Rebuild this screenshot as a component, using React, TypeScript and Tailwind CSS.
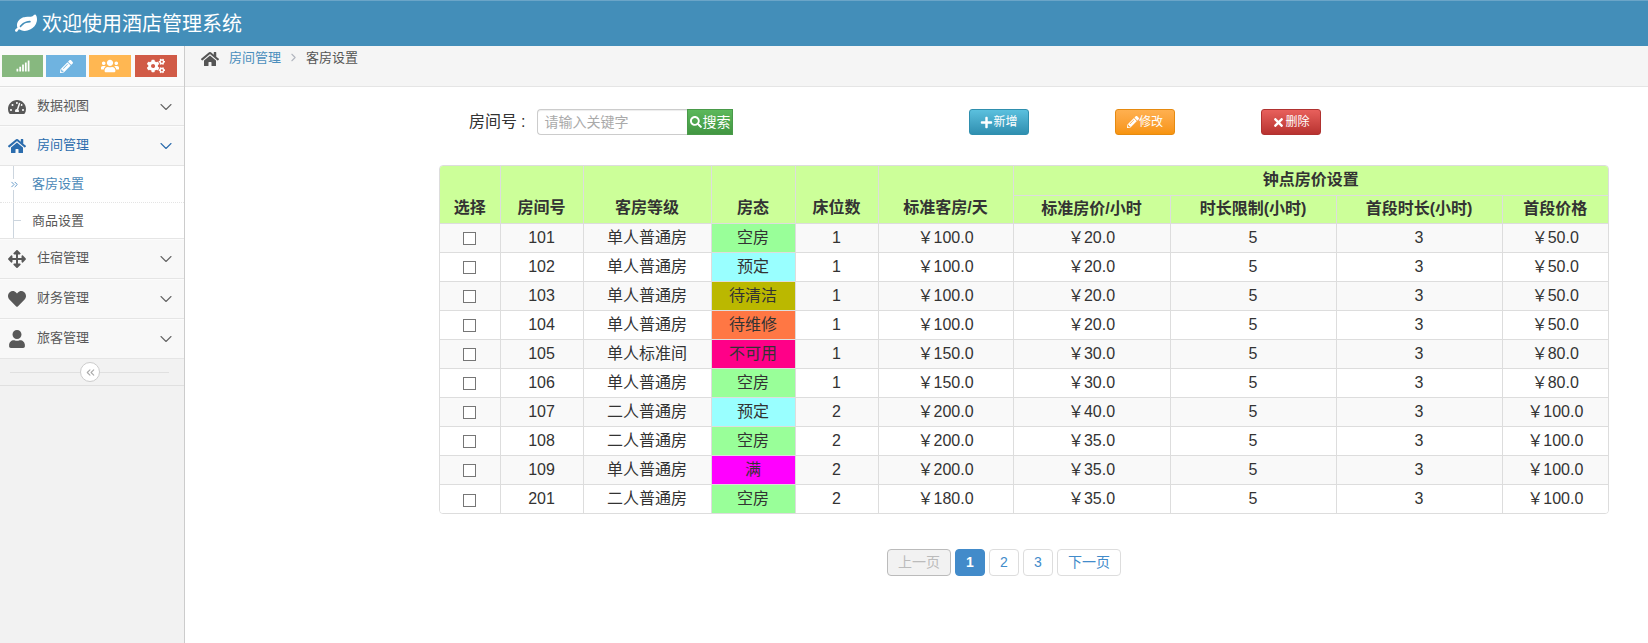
import { useState } from "react";
import { ChevronDown, ChevronRight, ChevronsLeft, ChevronsRight } from "lucide-react";
import { FaCogs, FaHeart, FaHome, FaPencilAlt, FaPlus, FaSearch, FaSignal, FaTachometerAlt, FaTimes, FaUser, FaUsers, FaArrowsAlt } from "react-icons/fa";

const rows = [
  ["101", "单人普通房", "空房", "1", "100.0", "20.0", "5", "3", "50.0"],
  ["102", "单人普通房", "预定", "1", "100.0", "20.0", "5", "3", "50.0"],
  ["103", "单人普通房", "待清洁", "1", "100.0", "20.0", "5", "3", "50.0"],
  ["104", "单人普通房", "待维修", "1", "100.0", "20.0", "5", "3", "50.0"],
  ["105", "单人标准间", "不可用", "1", "150.0", "30.0", "5", "3", "80.0"],
  ["106", "单人普通房", "空房", "1", "150.0", "30.0", "5", "3", "80.0"],
  ["107", "二人普通房", "预定", "2", "200.0", "40.0", "5", "3", "100.0"],
  ["108", "二人普通房", "空房", "2", "200.0", "35.0", "5", "3", "100.0"],
  ["109", "单人普通房", "满", "2", "200.0", "35.0", "5", "3", "100.0"],
  ["201", "二人普通房", "空房", "2", "180.0", "35.0", "5", "3", "100.0"],
];

const stateColors: Record<string, string> = {
  空房: "bg-[#99ff99]",
  预定: "bg-[#99ffff]",
  待清洁: "bg-[#bbb800]",
  待维修: "bg-[#ff7744]",
  不可用: "bg-[#ff0088]",
  满: "bg-[#ff00ff]",
};

function Leaf() {
  return (
    <svg viewBox="0 0 1792 1792" width="22" height="22" fill="currentColor">
      <path d="M1280 704q0-26-19-45t-45-19q-172 0-318 49.5t-259.5 134-235.5 219.5q-19 21-19 45 0 26 19 45t45 19q24 0 45-19 27-24 74-71t67-66q137-124 268.5-176t313.5-52q26 0 45-19t19-45zm512-198q0 95-20 193-46 224-184.5 383t-357.5 268q-214 108-438 108-148 0-286-47-15-5-88-42t-96-37q-16 0-39.5 32t-45 70-52.5 70-60 32q-30 0-51-11t-31-24-27-42q-2-4-6-11t-5.500-10-3-9.500-1.500-13.500q0-35 31-73.500t68-65.500 68-56 31-48q0-4-14-38t-16-44q-9-51-9-104 0-115 43.500-220t119-184.500 170.500-139 204-95.500q55-18 145-25.500t179.500-9 178.500-6 163.500-24 113.500-56.500l29.500-29.500 29.500-28 27-20 36.500-16 43.500-4.500q39 0 70.500 46t47.500 112 24 124 8 96z" />
    </svg>
  );
}

function MenuItem({ icon, label, active = false, height = "h-10" }: { icon: React.ReactNode; label: string; active?: boolean; height?: string }) {
  return (
    <div className={`flex items-center border-b border-t border-b-[#e5e5e5] border-t-[#fcfcfc] bg-[#f8f8f8] pl-2 pr-2 text-[13px] ${height} ${active ? "text-[#2b6cad]" : "text-[#585858]"}`}>
      <span className="flex w-[18px] justify-center text-[18px]">{icon}</span>
      <span className="ml-[11px] flex-1 -translate-y-px">{label}</span>
      <ChevronDown size={20} strokeWidth={1.3} className={active ? "text-[#2b6cad]" : "text-[#666]"} />
    </div>
  );
}

function ActionButton({ icon, label, color }: { icon: React.ReactNode; label: string; color: string }) {
  return (
    <button type="button" className={`flex h-[26px] w-[60px] items-center justify-center rounded-[3px] border text-[12px] text-white ${color}`}>
      {icon}
      {label}
    </button>
  );
}

const th = "border border-[#ddd] px-0 align-bottom text-[16px] font-bold";
const td = "border border-[#ddd] p-0 text-center";

export default function App() {
  const [page] = useState(1);

  return (
    <div className="flex h-[643px] w-[1648px] flex-col overflow-hidden bg-white [font-family:Liberation_Sans,Noto_Sans_CJK_SC,sans-serif] text-[#333]">
      <div className="flex h-[46px] shrink-0 items-center border-t border-[#6ba5c8] bg-[#438eb9] pl-[15px] text-[20px] text-white">
        <Leaf />
        <span className="ml-[5px]">欢迎使用酒店管理系统</span>
      </div>

      <div className="flex flex-1">
        <aside className="w-[185px] shrink-0 border-r border-[#ccc] bg-[#f2f2f2]">
          <div className="flex h-[41px] items-start gap-[3px] border-b border-[#e0e0e0] bg-[#fafafa] pl-0.5 pt-[9px]">
            <span className="flex h-[22px] w-[41px] items-center justify-center bg-[#87b87f] text-[14px] text-white"><FaSignal /></span>
            <span className="flex h-[22px] w-10 items-center justify-center bg-[#6fb3e0] text-[13px] text-white"><FaPencilAlt /></span>
            <span className="flex h-[22px] w-[42px] items-center justify-center bg-[#ffb752] text-[18px] text-white"><FaUsers /></span>
            <span className="ml-px flex h-[22px] w-[42px] items-center justify-center bg-[#d15b47] text-[18px] text-white"><FaCogs /></span>
          </div>
          <MenuItem icon={<FaTachometerAlt />} label="数据视图" height="h-[39px]" />
          <MenuItem icon={<FaHome />} label="房间管理" active />
          <div className="relative h-[73px] border-b border-[#e5e5e5] bg-white text-[13px]">
            <span className="absolute bottom-0 left-[13px] top-0 w-px bg-[#ccd5de]" />
            <div className="relative flex h-[37px] items-center border-b border-dotted border-[#e4e4e4] pl-[32px] text-[#4b88b7]">
              <ChevronsRight size={11} className="absolute left-[9px] bg-white text-[#5a93c5]" />
              客房设置
            </div>
            <div className="relative flex h-[35px] items-center pl-[32px] text-[#585858]">
              <span className="absolute left-[13px] h-px w-[8px] bg-[#ccd5de]" />
              商品设置
            </div>
          </div>
          <MenuItem icon={<FaArrowsAlt />} label="住宿管理" />
          <MenuItem icon={<FaHeart />} label="财务管理" />
          <MenuItem icon={<FaUser />} label="旅客管理" />
          <div className="relative flex h-[27px] items-center border-b border-[#e0e0e0]">
            <span className="ml-[10px] mr-[15px] h-px flex-1 bg-[#e0e0e0]" />
            <span className="absolute left-[80px] flex h-5 w-5 items-center justify-center rounded-full border border-[#ccc] bg-white text-[#aaa]">
              <ChevronsLeft size={13} />
            </span>
          </div>
        </aside>

        <main className="flex-1">
          <div className="flex h-[41px] items-start border-b border-[#e5e5e5] bg-[#f5f5f5] pl-4 pt-[2px] text-[13px]">
            <FaHome size={18} className="mt-[2px] text-[#555]" />
            <span className="ml-[10px] text-[#4c8fbd]">房间管理</span>
            <ChevronRight size={13} className="mx-[6px] mt-[3px] text-[#b2b6bf]" />
            <span className="text-[#555]">客房设置</span>
          </div>

          <div className="pl-[254px] pt-[22px]">
            <div className="flex h-[26px] items-center">
              <div className="flex w-[530px] items-center text-[16px]">
                <span className="ml-[30px]">房间号</span>
                <span className="ml-[4px]">:</span>
                <input
                  placeholder="请输入关键字"
                  className="ml-[12px] h-[26px] w-[150px] rounded-l-[4px] border border-r-0 border-[#ccc] pl-[6px] text-[14px] shadow-[inset_0_1px_1px_rgba(0,0,0,0.075)] outline-none placeholder:text-[#aaa]"
                />
                <button type="button" className="flex h-[26px] w-[46px] items-center justify-center border border-[#4a9a4a] bg-gradient-to-b from-[#5cb85c] to-[#419641] text-[14px] text-white">
                  <FaSearch size={12} />搜索
                </button>
              </div>
              <div className="flex gap-[86px]">
                <ActionButton icon={<FaPlus size={13} />} label="新增" color="border-[#2f8fae] bg-gradient-to-b from-[#5bc0de] to-[#2f8fb0]" />
                <ActionButton icon={<FaPencilAlt size={12} />} label="修改" color="border-[#e68a10] bg-gradient-to-b from-[#ffb04f] to-[#f7940c]" />
                <ActionButton icon={<FaTimes size={13} />} label="删除" color="border-[#b03230] bg-gradient-to-b from-[#e8605c] to-[#b83230]" />
              </div>
            </div>

            <div className="mt-[30px] w-[1170px] overflow-hidden rounded-[4px] border border-[#ddd]">
              <table className="w-full table-fixed border-collapse border-hidden text-[16px]">
                <colgroup>
                  <col className="w-[60px]" />
                  <col className="w-[83px]" />
                  <col className="w-[128px]" />
                  <col className="w-[84px]" />
                  <col className="w-[83px]" />
                  <col className="w-[135px]" />
                  <col className="w-[157px]" />
                  <col className="w-[166px]" />
                  <col className="w-[166px]" />
                  <col />
                </colgroup>
                <thead className="bg-[#ccff99]">
                  <tr className="h-[29px]">
                    <th rowSpan={2} className={th}><div className="pb-[3px]">选择</div></th>
                    <th rowSpan={2} className={th}><div className="pb-[3px]">房间号</div></th>
                    <th rowSpan={2} className={th}><div className="pb-[3px]">客房等级</div></th>
                    <th rowSpan={2} className={th}><div className="pb-[3px]">房态</div></th>
                    <th rowSpan={2} className={th}><div className="pb-[3px]">床位数</div></th>
                    <th rowSpan={2} className={th}><div className="pb-[3px]">标准客房/天</div></th>
                    <th colSpan={4} className={`${th} align-middle`}>钟点房价设置</th>
                  </tr>
                  <tr className="h-[28px]">
                    <th className={`${th} align-middle`}>标准房价/小时</th>
                    <th className={`${th} align-middle`}>时长限制(小时)</th>
                    <th className={`${th} align-middle`}>首段时长(小时)</th>
                    <th className={`${th} align-middle`}>首段价格</th>
                  </tr>
                </thead>
                <tbody>
                  {rows.map((r, i) => (
                    <tr key={r[0]} className={`h-[29px] ${i % 2 === 0 ? "bg-[#f9f9f9]" : "bg-white"}`}>
                      <td className={td}>
                        <span className="mt-px inline-block size-[13px] border border-[#767676] bg-white align-middle" />
                      </td>
                      <td className={td}>{r[0]}</td>
                      <td className={td}>{r[1]}</td>
                      <td className={`${td} ${stateColors[r[2]]}`}>{r[2]}</td>
                      <td className={td}>{r[3]}</td>
                      <td className={td}>￥{r[4]}</td>
                      <td className={td}>￥{r[5]}</td>
                      <td className={td}>{r[6]}</td>
                      <td className={td}>{r[7]}</td>
                      <td className={td}>￥{r[8]}</td>
                    </tr>
                  ))}
                </tbody>
              </table>
            </div>

            <div className="ml-[448px] mt-[35px] flex gap-1 text-[14px]">
              <span className="flex h-[27px] w-16 items-center justify-center rounded-[4px] border border-[#bbb] bg-[#f2f2f2] text-[#bbb]">上一页</span>
              {[1, 2, 3].map((n) => (
                <span
                  key={n}
                  className={`flex h-[27px] w-[30px] items-center justify-center rounded-[4px] border ${n === page ? "border-[#428bca] bg-[#428bca] font-bold text-white" : "border-[#ddd] bg-white text-[#428bca]"}`}
                >
                  {n}
                </span>
              ))}
              <span className="flex h-[27px] w-[64px] items-center justify-center rounded-[4px] border border-[#ddd] bg-white text-[#428bca]">下一页</span>
            </div>
          </div>
        </main>
      </div>
    </div>
  );
}
